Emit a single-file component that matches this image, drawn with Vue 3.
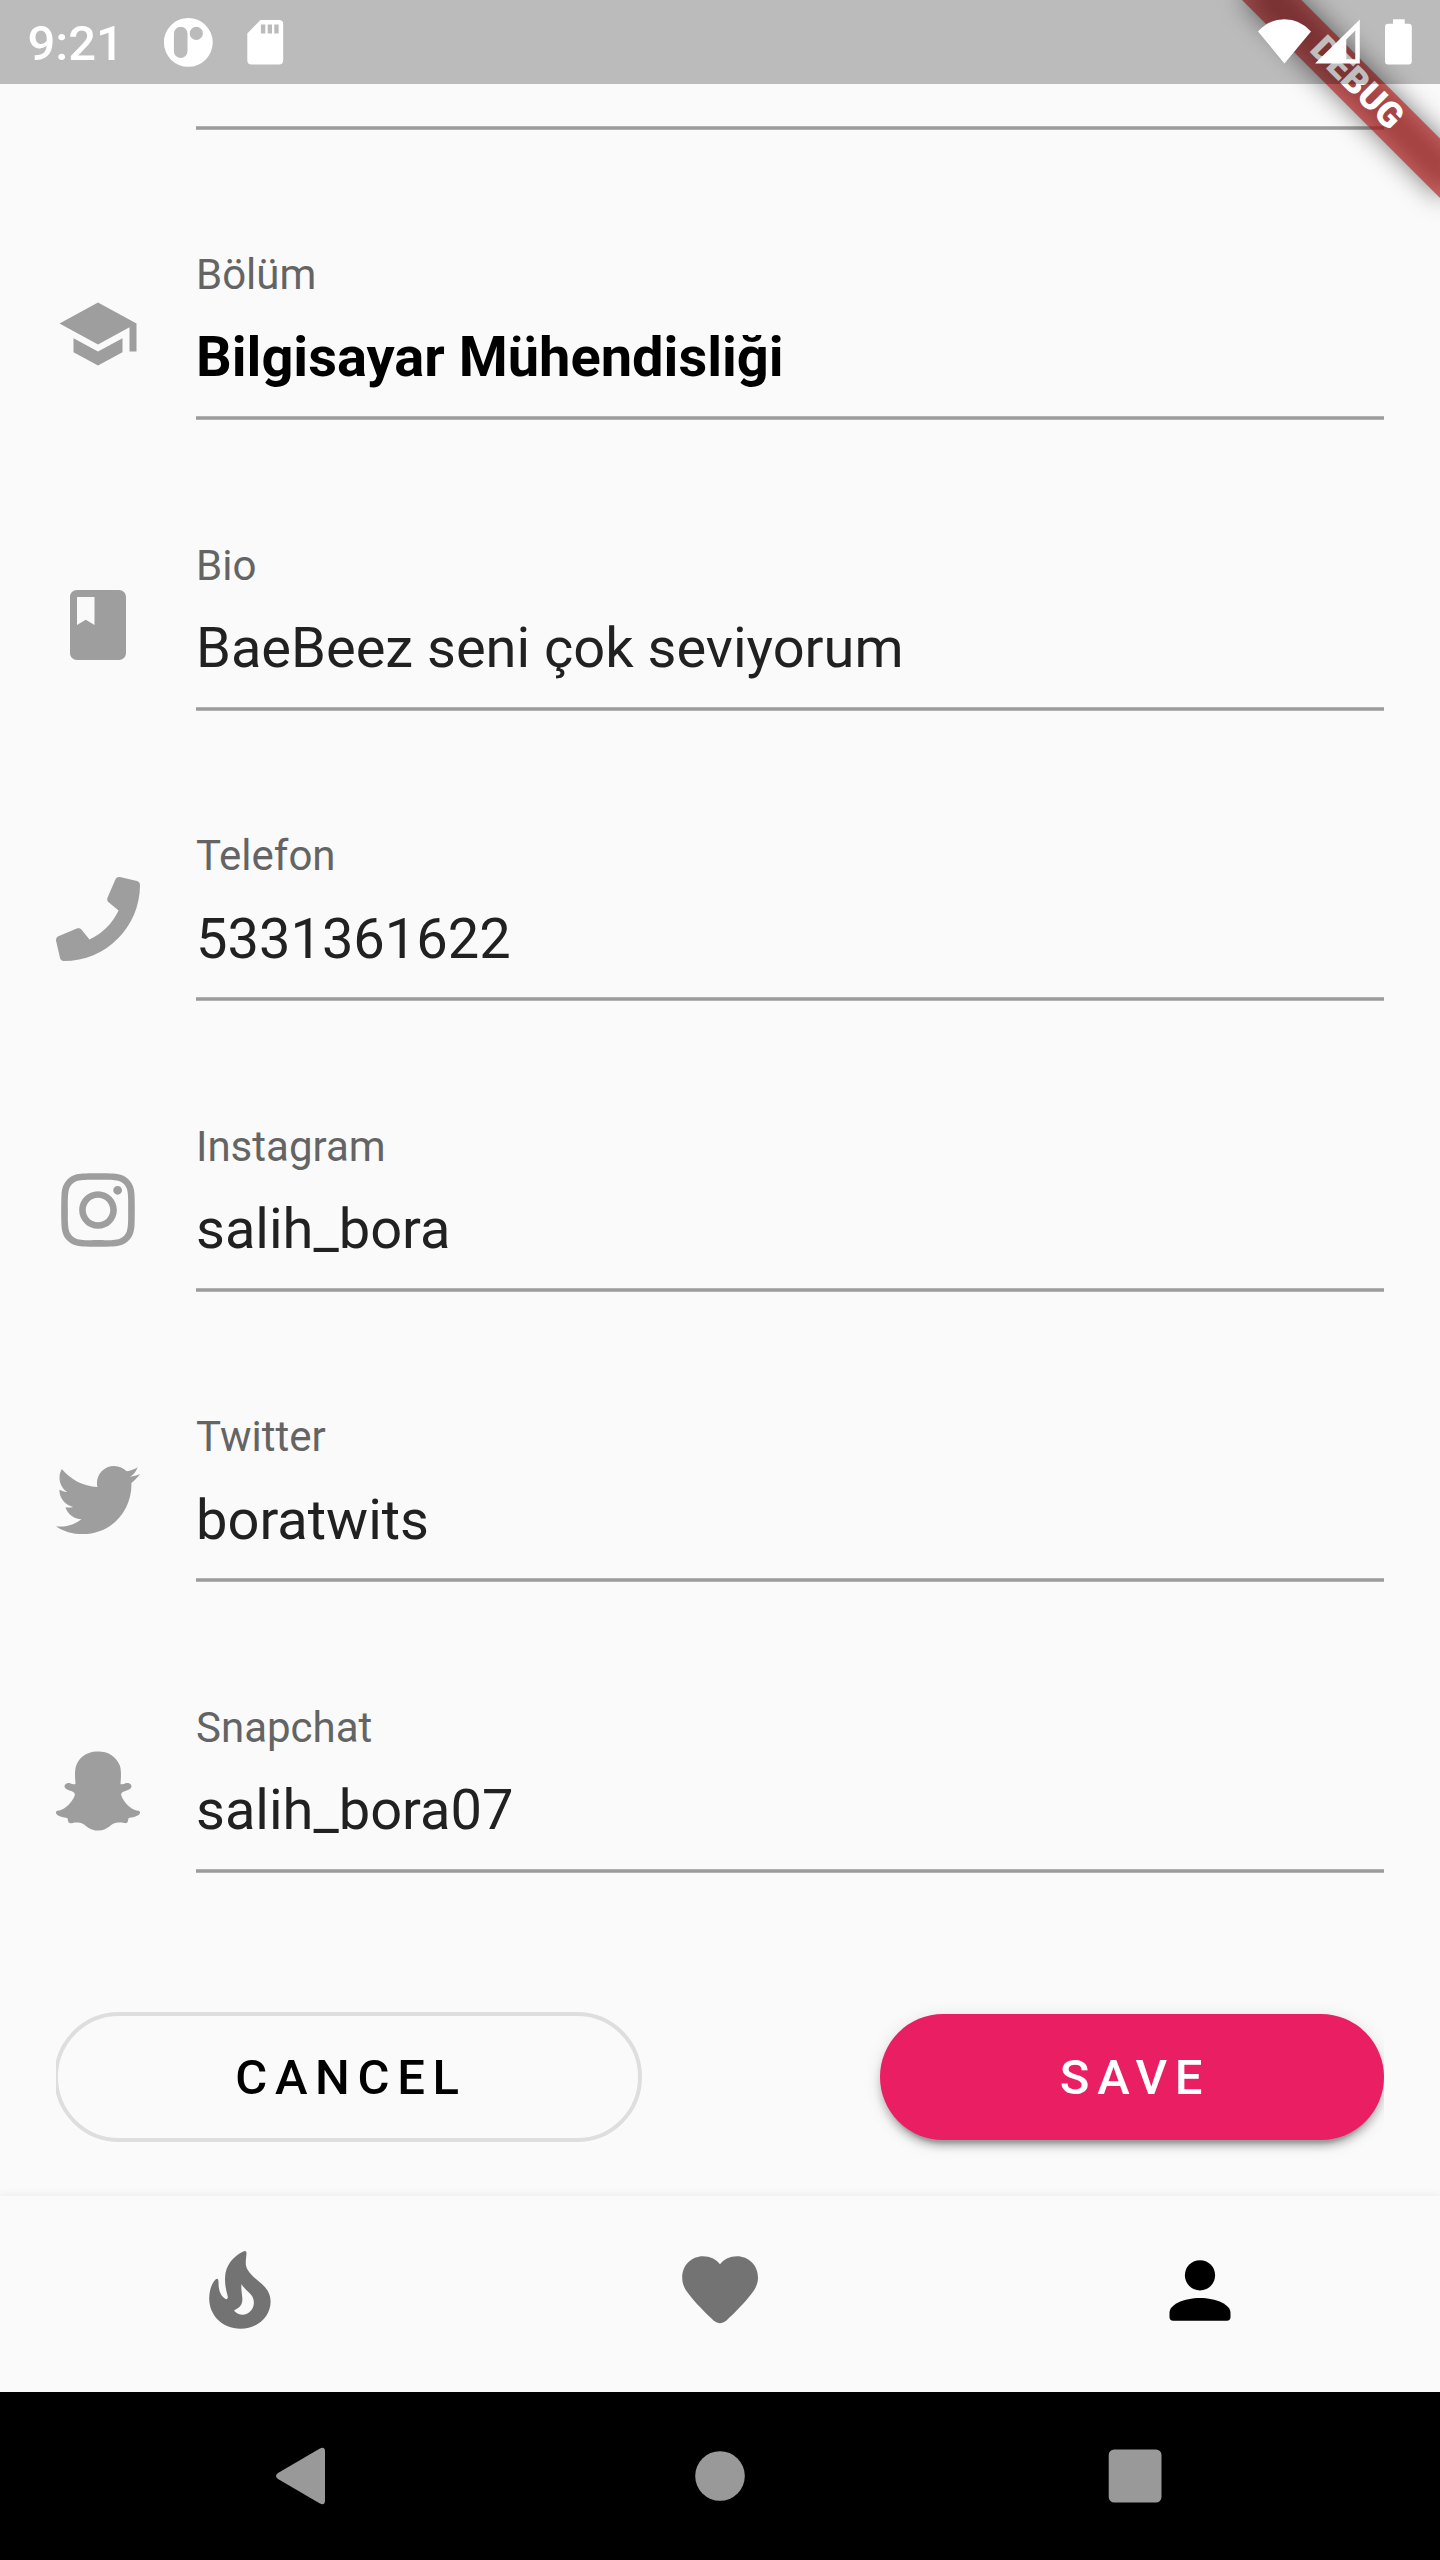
<script setup>
const fields = [
  {
    label: 'Bölüm',
    value: 'Bilgisayar Mühendisliği',
    strong: true,
    viewBox: '0 0 24 24',
    path: 'M5 13.18v4L12 21l7-3.82v-4L12 17l-7-3.82zM12 3L1 9l11 6 9-4.91V17h2V9L12 3z',
  },
  {
    label: 'Bio',
    value: 'BaeBeez seni çok seviyorum',
    viewBox: '0 0 24 24',
    path: 'M18 2H6c-1.1 0-2 .9-2 2v16c0 1.1.9 2 2 2h12c1.1 0 2-.9 2-2V4c0-1.1-.9-2-2-2zM6 4h5v8l-2.5-1.5L6 12V4z',
  },
  {
    label: 'Telefon',
    value: '5331361622',
    brand: true,
    viewBox: '0 0 512 512',
    path: 'M493.4 24.6l-104-24c-11.3-2.6-22.9 3.3-27.5 13.9l-48 112c-4.2 9.8-1.4 21.3 6.9 28l60.6 49.6c-36 76.7-98.9 140.5-177.2 177.2l-49.6-60.6c-6.8-8.3-18.2-11.1-28-6.9l-112 48C3.9 366.5-2 378.1.6 389.4l24 104C27.1 504.2 36.7 512 48 512c256.1 0 464-207.5 464-464 0-11.2-7.7-20.9-18.6-23.4z',
  },
  {
    label: 'Instagram',
    value: 'salih_bora',
    brand: true,
    viewBox: '-32 0 512 512',
    path: 'M224.1 141c-63.6 0-114.9 51.3-114.9 114.9s51.3 114.9 114.9 114.9S339 319.5 339 255.9 287.7 141 224.1 141zm0 189.6c-41.1 0-74.7-33.5-74.7-74.7s33.5-74.7 74.7-74.7 74.7 33.5 74.7 74.7-33.6 74.7-74.7 74.7zm146.4-194.3c0 14.9-12 26.8-26.8 26.8-14.9 0-26.8-12-26.8-26.8s12-26.8 26.8-26.8 26.8 12 26.8 26.8zm76.1 27.2c-1.7-35.9-9.9-67.7-36.2-93.9-26.2-26.2-58-34.4-93.9-36.2-37-2.1-147.9-2.1-184.9 0-35.8 1.7-67.6 9.9-93.9 36.1s-34.4 58-36.2 93.9c-2.1 37-2.1 147.9 0 184.9 1.7 35.9 9.9 67.7 36.2 93.9s58 34.4 93.9 36.2c37 2.1 147.9 2.1 184.9 0 35.9-1.7 67.7-9.9 93.9-36.2 26.2-26.2 34.4-58 36.2-93.9 2.1-37 2.1-147.8 0-184.8zM398.8 388c-7.8 19.6-22.9 34.7-42.6 42.6-29.5 11.7-99.5 9-132.1 9s-102.7 2.6-132.1-9c-19.6-7.8-34.7-22.9-42.6-42.6-11.7-29.5-9-99.5-9-132.1s-2.6-102.7 9-132.1c7.8-19.6 22.9-34.7 42.6-42.6 29.5-11.7 99.5-9 132.1-9s102.7-2.6 132.1 9c19.6 7.8 34.7 22.9 42.6 42.6 11.7 29.5 9 99.5 9 132.1s2.7 102.7-9 132.1z',
  },
  {
    label: 'Twitter',
    value: 'boratwits',
    brand: true,
    viewBox: '0 0 512 512',
    path: 'M459.37 151.716c.325 4.548.325 9.097.325 13.645 0 138.72-105.583 298.558-298.558 298.558-59.452 0-114.68-17.219-161.137-47.106 8.447.974 16.568 1.299 25.34 1.299 49.055 0 94.213-16.568 130.274-44.832-46.132-.975-84.792-31.188-98.112-72.772 6.498.974 12.995 1.624 19.818 1.624 9.421 0 18.843-1.3 27.614-3.573-48.081-9.747-84.143-51.98-84.143-102.985v-1.299c13.969 7.797 30.214 12.67 47.431 13.319-28.264-18.843-46.781-51.005-46.781-87.391 0-19.492 5.197-37.36 14.294-52.954 51.655 63.675 129.3 105.258 216.365 109.807-1.624-7.797-2.599-15.918-2.599-24.04 0-57.828 46.782-104.934 104.934-104.934 30.213 0 57.502 12.67 76.67 33.137 23.715-4.548 46.456-13.32 66.599-25.34-7.798 24.366-24.366 44.833-46.132 57.827 21.117-2.273 41.584-8.122 60.426-16.243-14.292 20.791-32.161 39.308-52.628 54.253z',
  },
  {
    label: 'Snapchat',
    value: 'salih_bora07',
    brand: true,
    viewBox: '0 0 512 512',
    path: 'M510.846 392.673c-5.211 12.157-27.239 21.089-67.36 27.318-2.064 2.786-3.775 14.686-6.507 23.956-1.625 5.566-5.623 8.869-12.128 8.869l-.297-.005c-9.395 0-19.203-4.323-38.852-4.323-26.521 0-35.662 6.043-56.254 20.588-21.832 15.438-42.771 28.764-74.027 27.399-31.646 2.334-58.025-16.908-72.871-27.404-20.714-14.643-29.828-20.582-56.241-20.582-18.864 0-30.736 4.72-38.852 4.72-8.073 0-11.213-4.922-12.422-9.04-2.703-9.189-4.404-21.263-6.523-24.13-20.679-3.209-67.31-11.344-68.498-32.15a10.627 10.627 0 0 1 8.877-11.069c69.583-11.455 100.924-82.901 102.227-85.934.074-.176.155-.344.237-.515 3.713-7.537 4.544-13.849 2.463-18.753-5.05-11.896-26.872-16.164-36.053-19.796-23.715-9.366-27.015-20.128-25.612-27.504 2.437-12.836 21.725-20.735 33.002-15.453 8.919 4.181 16.843 6.297 23.547 6.297 5.022 0 8.212-1.204 9.96-2.171-2.043-35.936-7.101-87.29 5.687-115.969C158.122 21.304 229.705 15.42 250.826 15.42c.944 0 9.141-.089 10.11-.089 52.148 0 102.254 26.78 126.723 81.643 12.777 28.65 7.749 79.792 5.695 116.009 1.582.872 4.357 1.942 8.599 2.139 6.397-.286 13.815-2.389 22.069-6.257 6.085-2.846 14.406-2.461 20.48.058l.029.01c9.476 3.385 15.439 10.215 15.589 17.87.184 9.747-8.522 18.165-25.878 25.018-2.118.835-4.694 1.655-7.434 2.525-9.797 3.106-24.6 7.805-28.616 17.271-2.079 4.904-1.256 11.211 2.46 18.748.087.168.166.342.239.515 1.301 3.03 32.615 74.46 102.23 85.934 6.427 1.058 11.163 7.877 7.725 15.859z',
  },
]
</script>

<template>
  <div class="screen">
    <main class="content">
      <div class="field-row field-row--cut">
        <div class="field"><div class="underline"></div></div>
      </div>

      <div v-for="f in fields" :key="f.label" class="field-row">
        <svg class="field-icon" :class="{ 'field-icon--brand': f.brand }" :viewBox="f.viewBox">
          <path :d="f.path" />
        </svg>
        <div class="field">
          <div class="label">{{ f.label }}</div>
          <div class="value" :class="{ 'value--strong': f.strong }">{{ f.value }}</div>
          <div class="underline"></div>
        </div>
      </div>

      <div class="actions">
        <button class="btn btn--outline">CANCEL</button>
        <button class="btn btn--primary">SAVE</button>
      </div>
    </main>

    <nav class="tabs">
      <div class="tab">
        <svg class="tab-icon" viewBox="194 2248 92 92">
          <path
            fill-rule="evenodd"
            d="M243.2 2251.500 Q246.900 2249.600 246.500 2254 C245.600 2261 245 2266 247.800 2270 C252 2277 260 2281.500 265.300 2287.500 C269 2292 270.600 2296 270.600 2301.500 C270.600 2316 258.500 2328.700 240.500 2328.700 C222 2328.700 209.200 2315 209.200 2298.500 C209.200 2291 211.500 2284 215 2280 Q218.400 2277 218.500 2281.500 C218.400 2289.500 220 2295.500 225.500 2299 Q228.300 2299.800 227.700 2296.200 C226 2290 224.700 2284.500 225.100 2277 C225.600 2265.500 233 2256.500 243.200 2251.500 Z M241.500 2284 C240.700 2291 242.800 2296 242.300 2300.800 C241.800 2306.500 237.500 2308.800 234.500 2310 Q234 2310.700 234.800 2311.500 C237.500 2313.800 239.700 2314.800 242.500 2314.800 C249 2314.800 253.900 2309 253.900 2302.500 C253.900 2293.500 245.500 2291.500 241.500 2284 Z"
          />
        </svg>
      </div>
      <div class="tab">
        <svg class="tab-icon" viewBox="674 2248 92 92">
          <path
            d="M720 2264.300 C716 2259 710 2256.200 703 2256.200 C691.500 2256.200 682.200 2265 682.200 2277.500 C682.200 2284 684.500 2288.500 688.500 2293.800 C695 2302.500 705 2312.500 713.500 2320.500 Q720 2325.800 726.500 2320.500 C735 2312.500 745 2302.500 751.500 2293.800 C755.500 2288.500 758 2284 758 2277.500 C758 2265 748.500 2256.200 737 2256.200 C730 2256.200 724 2259 720 2264.300 Z"
          />
        </svg>
      </div>
      <div class="tab tab--active">
        <svg class="tab-icon" viewBox="1154 2248 92 92">
          <circle cx="1200" cy="2275.300" r="15.100" />
          <path
            d="M1200 2298.100 C1216 2298.100 1230.500 2304.500 1230.500 2313 V2317 Q1230.500 2320.700 1226.800 2320.700 H1173.200 Q1169.500 2320.700 1169.500 2317 V2313 C1169.500 2304.500 1184 2298.100 1200 2298.100 Z"
          />
        </svg>
      </div>
    </nav>

    <footer class="system-nav">
      <svg class="sys-icon" viewBox="0 0 84 84">
        <path d="M20 39 L61.500 14.800 Q67 12 67 17.500 V66.500 Q67 72 61.500 69.200 L20 45 Q16 42 20 39 Z" />
      </svg>
      <svg class="sys-icon" viewBox="0 0 84 84"><circle cx="42" cy="42" r="24.800" /></svg>
      <svg class="sys-icon" viewBox="0 0 84 84"><rect x="10.700" y="15.400" width="52.800" height="53.200" rx="5.500" /></svg>
    </footer>

    <div class="banner-corner">
      <div class="banner">
        <div class="banner-shadow"></div>
        <div class="banner-strip">DEBUG</div>
      </div>
    </div>

    <header class="status">
      <span class="clock">9:21</span>
      <svg class="status-left" width="130" height="84" viewBox="160 0 130 84">
        <path
          fill-rule="evenodd"
          d="M188.300 18 a24.400 24.400 0 1 1 0 48.800 a24.400 24.400 0 1 1 0 -48.800 Z M180.700 26.700 a6.800 6.800 0 0 0 -6.800 6.800 v17.700 a6.800 6.800 0 0 0 13.600 0 v-17.700 a6.800 6.800 0 0 0 -6.800 -6.800 Z M196.300 26.800 a6.600 6.600 0 1 0 0 13.200 a6.600 6.600 0 1 0 0 -13.200 Z"
        />
        <path
          fill-rule="evenodd"
          d="M260.500 20 H279 Q283.200 20 283.200 24.200 V60.300 Q283.200 64.500 279 64.500 H251.500 Q247.300 64.500 247.300 60.300 V33.400 Z M260.900 24.500 V33.600 H265.300 V24.500 Z M267.700 24.500 V33.600 H272 V24.500 Z M274.300 24.500 V33.600 H278.600 V24.500 Z"
        />
      </svg>
      <svg class="status-right" width="190" height="84" viewBox="1250 0 190 84">
        <path d="M1258 31.400 Q1269 19.200 1284.400 19.200 Q1300 19.200 1311 31.400 L1284.400 63.400 Z" />
        <path fill-rule="evenodd" d="M1315 63.500 L1359.800 19.600 V63.500 Z M1346.300 39.500 V59.300 H1355.300 V30.500 Z" />
        <path d="M1393 19.200 H1404.700 V23.800 H1408.500 Q1411.800 23.800 1411.800 27 V61.300 Q1411.800 64.500 1408.500 64.500 H1388.300 Q1385 64.500 1385 61.300 V27 Q1385 23.800 1388.300 23.800 H1393 Z" />
      </svg>
    </header>
  </div>
</template>

<style>
body {
  margin: 0;
}
</style>

<style scoped>
.screen {
  position: relative;
  display: flex;
  flex-direction: column;
  width: 1440px;
  height: 2560px;
  overflow: hidden;
  background: #fafafa;
  font-family: Roboto, "Noto Sans", sans-serif;
}

.content {
  flex: 1;
  min-height: 0;
  padding: 0 56px;
  overflow: hidden;
}

.field-row {
  display: flex;
  gap: 56px;
  height: 290.5px;
}

.field-row--cut {
  height: 129.9px;
  padding-left: 140px;
  gap: 0;
}

.field-icon {
  flex: none;
  width: 84px;
  height: 84px;
  margin-top: 162.5px;
  fill: #9e9e9e;
}

.field-icon--brand {
  margin-top: 166.4px;
}

.field {
  flex: 1;
  display: flex;
  flex-direction: column;
  justify-content: flex-end;
}

.label {
  margin-bottom: 24px;
  color: #646464;
  font-size: 42px;
  line-height: 50px;
}

.value {
  margin: 0.3px 0 25.7px;
  color: #212121;
  font-size: 56px;
  line-height: 66px;
}

.value--strong {
  margin: 0 0 26px;
  color: #000;
  font-weight: 700;
}

.underline {
  box-sizing: border-box;
  height: 4px;
  border: solid #b2b2b2;
  border-width: 1px 0;
  background: #9b9b9b;
}

.actions {
  display: flex;
  justify-content: space-between;
  height: 170px;
  padding-top: 137.6px;
  clip-path: inset(0);
}

.btn {
  box-sizing: border-box;
  height: 126px;
  margin: 3.5px 0 0;
  padding: 3px 0 0 6px;
  border: 0;
  border-radius: 63px;
  background: none;
  font-family: inherit;
  font-size: 49px;
  font-weight: 500;
  line-height: 58px;
  letter-spacing: 7.7px;
}

.btn--outline {
  width: 588px;
  height: 130px;
  margin: 1.5px 0 0 -2px;
  border: 4px solid #dedede;
  border-radius: 65px;
  color: #000;
}

.btn--primary {
  width: 504px;
  background: #e91e63;
  color: #fff;
  box-shadow:
    0 10.5px 3.5px -7px rgba(0, 0, 0, 0.2),
    0 7px 7px 0 rgba(0, 0, 0, 0.18),
    0 3.5px 17.5px 0 rgba(0, 0, 0, 0.12);
}

.tabs {
  flex: none;
  display: flex;
  height: 196px;
  background: #fafafa;
  box-shadow: 0 0 10px rgba(0, 0, 0, 0.08);
}

.tab {
  flex: 1;
  display: flex;
  align-items: center;
  justify-content: center;
}

.tab-icon {
  width: 92px;
  height: 92px;
  fill: #737373;
}

.tab--active .tab-icon {
  fill: #000;
}

.system-nav {
  position: relative;
  flex: none;
  display: flex;
  align-items: center;
  gap: 336px;
  height: 168px;
  padding-left: 258px;
  background: #000;
}

.sys-icon {
  width: 84px;
  height: 84px;
  fill: #999;
}

/* Diagonal ribbon over the top-right corner */
.banner-corner {
  position: absolute;
  top: 0;
  right: 0;
  width: 320px;
  height: 320px;
  overflow: hidden;
}

.banner {
  position: absolute;
  top: 98px;
  left: 180px;
  width: 280px;
  height: 42px;
  transform: rotate(45deg);
  transform-origin: 140px -98px;
}

.banner-shadow {
  position: absolute;
  inset: 0;
  background: rgba(0, 0, 0, 0.5);
  filter: blur(12.6px);
}

.banner-strip {
  position: absolute;
  inset: 0;
  background: rgba(183, 28, 28, 0.63);
  color: #fff;
  font-size: 35.7px;
  font-weight: 900;
  line-height: 39px;
  text-align: center;
}

.status {
  position: absolute;
  top: 0;
  left: 0;
  display: flex;
  align-items: center;
  width: 1440px;
  height: 84px;
  background: rgba(0, 0, 0, 0.25);
  fill: #fff;
}

.clock {
  box-sizing: border-box;
  width: 160px;
  padding: 4px 0 0 27.5px;
  color: #fff;
  font-size: 49px;
  font-weight: 500;
  line-height: 80px;
}

.status-right {
  margin-left: auto;
}
</style>
